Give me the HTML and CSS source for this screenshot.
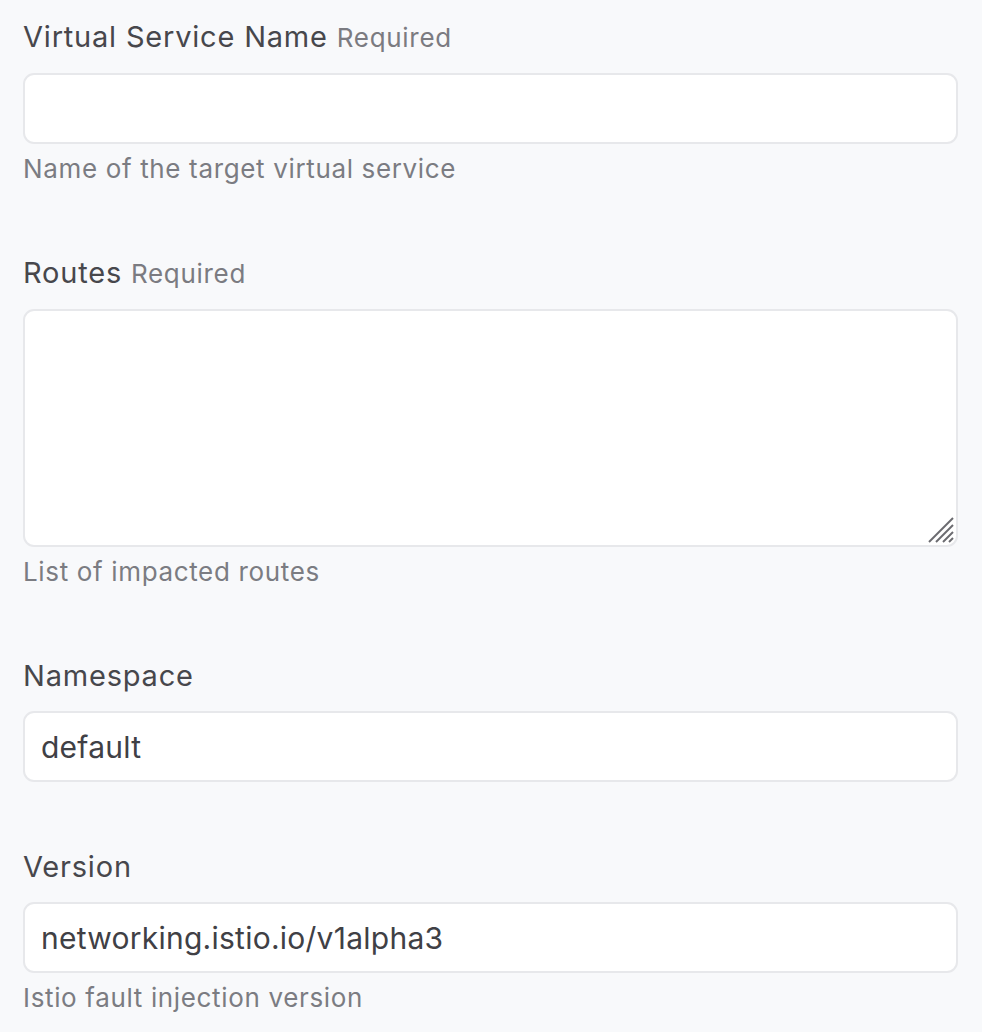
FILE: index.html
```html
<!DOCTYPE html>
<html lang="en">
<head>
<meta charset="utf-8">
<title>Fault injection form</title>
<link rel="stylesheet" href="styles.css">
</head>
<body>
<form class="form">
  <div class="field">
    <label class="label" for="vs">Virtual Service Name <span class="req">Required</span></label>
    <input class="input" id="vs" type="text">
    <div class="help">Name of the target virtual service</div>
  </div>
  <div class="field">
    <label class="label" for="routes">Routes <span class="req">Required</span></label>
    <div class="ta-wrap">
      <textarea class="input textarea" id="routes"></textarea>
      <svg class="grip" width="26" height="26" viewBox="0 0 26 26" aria-hidden="true">
        <g stroke="#6b6b70" stroke-width="2" stroke-linecap="butt">
          <line x1="1" y1="25" x2="25" y2="1"/>
          <line x1="8" y1="25" x2="25" y2="8"/>
          <line x1="15" y1="25" x2="25" y2="15"/>
          <line x1="21" y1="25" x2="25" y2="21"/>
        </g>
      </svg>
    </div>
    <div class="help">List of impacted routes</div>
  </div>
  <div class="field">
    <label class="label" for="ns">Namespace</label>
    <input class="input" id="ns" type="text" value="default">
  </div>
  <div class="field">
    <label class="label" for="ver">Version</label>
    <input class="input" id="ver" type="text" value="networking.istio.io/v1alpha3">
    <div class="help">Istio fault injection version</div>
  </div>
</form>
</body>
</html>
```

FILE: styles.css
```css
html, body {
  margin: 0;
  padding: 0;
  background: #f8f9fb;
}
body {
  font-family: Inter, "Noto Sans", "Liberation Sans", sans-serif;
  color: #48484e;
}
.form {
  display: flex;
  flex-direction: column;
  gap: 65px;
  padding: 17px 24px 0 23px;
}
.field {
  display: flex;
  flex-direction: column;
}
.label {
  font-size: 29px;
  line-height: 40px;
  letter-spacing: 0.8px;
  color: #47474c;
  margin-bottom: 15px;
}
.req {
  font-size: 26px;
  letter-spacing: 0.7px;
  color: #7b7b81;
}
.input {
  box-sizing: border-box;
  width: 100%;
  height: 71px;
  margin: 0;
  border: 2px solid #e7e8eb;
  border-radius: 11px;
  background: #ffffff;
  padding: 0 16px;
  font-family: inherit;
  font-size: 30px;
  letter-spacing: 0.25px;
  color: #404045;
  outline: none;
}
.ta-wrap {
  position: relative;
  display: flex;
}
.textarea {
  height: 238px;
  resize: none;
  display: block;
}
.grip {
  position: absolute;
  right: 4px;
  bottom: 4px;
}
.help {
  margin-top: 6px;
  font-size: 26px;
  line-height: 38px;
  letter-spacing: 0.65px;
  color: #7b7c82;
}
```
